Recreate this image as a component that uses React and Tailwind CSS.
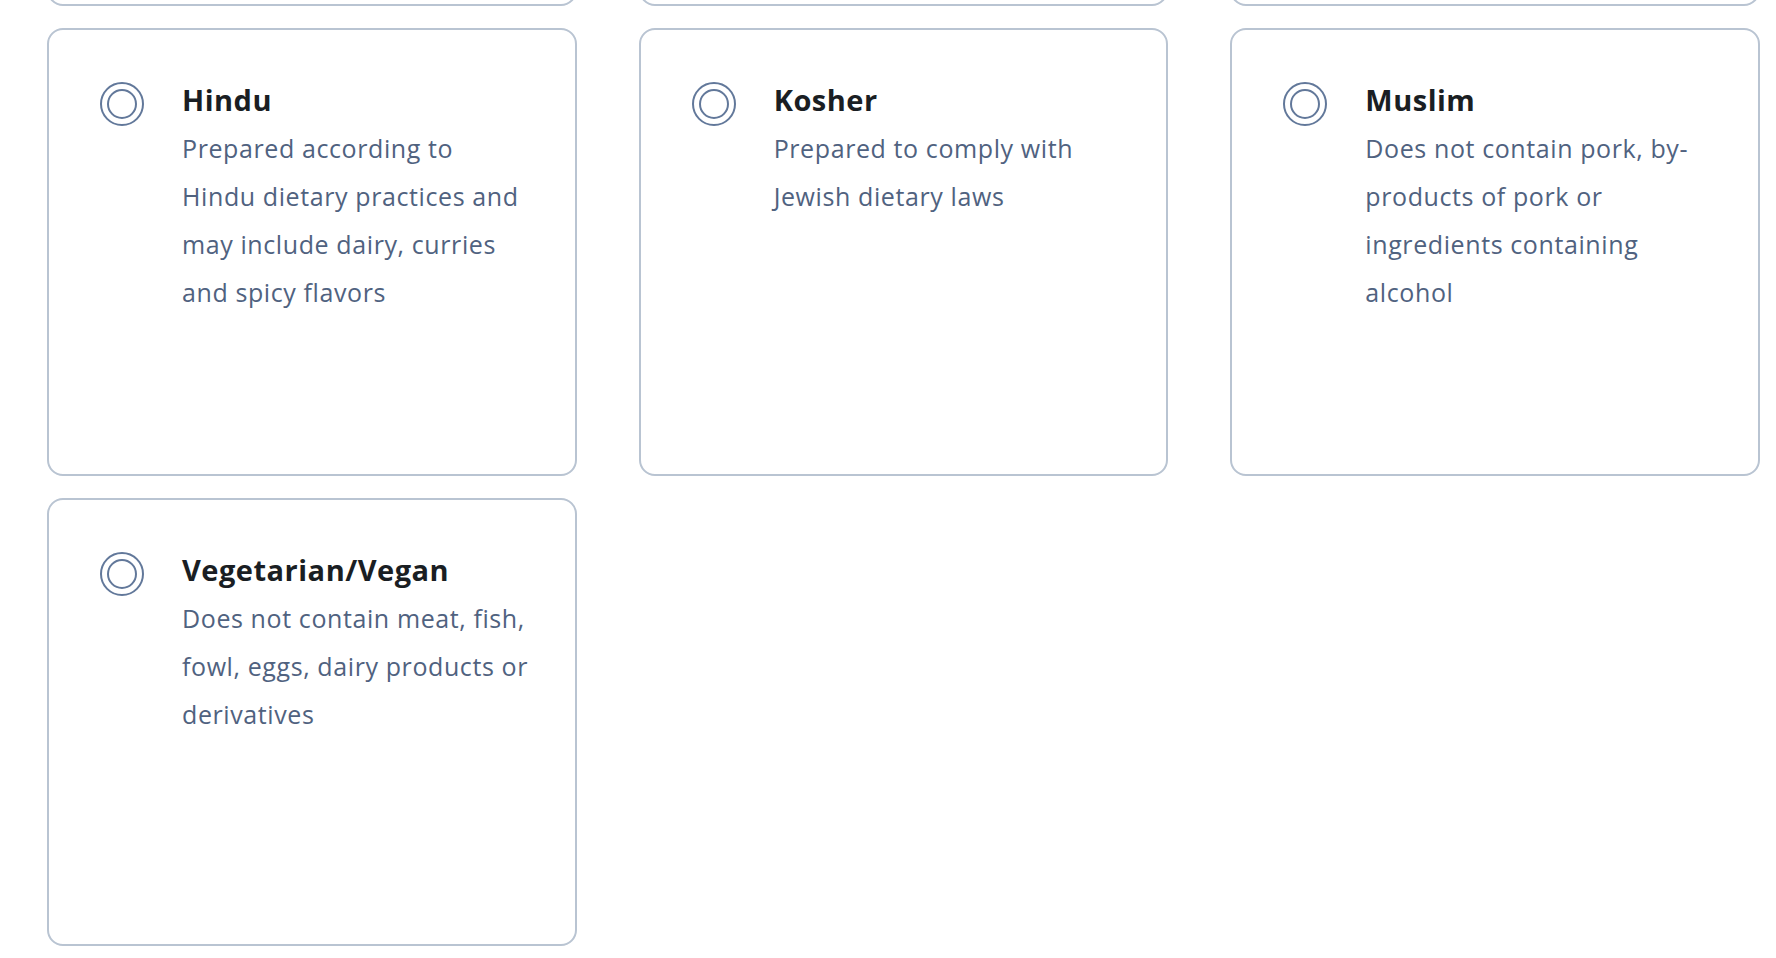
import React from "react";

const cards = [
  null,
  null,
  null,
  {
    title: "Hindu",
    lines: ["Prepared according to", "Hindu dietary practices and", "may include dairy, curries", "and spicy flavors"],
  },
  {
    title: "Kosher",
    lines: ["Prepared to comply with", "Jewish dietary laws"],
  },
  {
    title: "Muslim",
    lines: ["Does not contain pork, by-", "products of pork or", "ingredients containing", "alcohol"],
  },
  {
    title: "Vegetarian/Vegan",
    lines: ["Does not contain meat, fish,", "fowl, eggs, dairy products or", "derivatives"],
  },
];

function Radio() {
  return (
    <div className="mt-[2px] flex h-[44px] w-[44px] shrink-0 items-center justify-center rounded-full border-2 border-[#62789a]">
      <div className="h-[30px] w-[30px] rounded-full border-2 border-[#62789a]" />
    </div>
  );
}

function Card({ data }) {
  return (
    <div className="h-[448px] rounded-[16px] border-2 border-[#b9c4d2] bg-white pl-[51px] pr-[30px] pt-[50px]">
      {data && (
        <div className="flex items-start gap-[38px]">
          <Radio />
          <div className="min-w-0">
            <div className="text-[29px] font-bold leading-[40px] tracking-[0.5px] text-[#1a1e23]">{data.title}</div>
            <div className="mt-[4px] text-[25px] leading-[48px] tracking-[0.6px] text-[#50627f]">
              {data.lines.map((l, i) => (
                <div key={i} className="whitespace-nowrap">
                  {l}
                </div>
              ))}
            </div>
          </div>
        </div>
      )}
    </div>
  );
}

export default function App() {
  return (
    <div
      className="h-[958px] w-[1776px] overflow-hidden bg-white"
      style={{ fontFamily: '"Open Sans", "Noto Sans", sans-serif' }}
    >
      <div className="-mt-[442px] grid grid-cols-3 gap-x-[62px] gap-y-[22px] pl-[47px] pr-[16px]">
        {cards.map((c, i) => (
          <Card key={i} data={c} />
        ))}
      </div>
    </div>
  );
}
